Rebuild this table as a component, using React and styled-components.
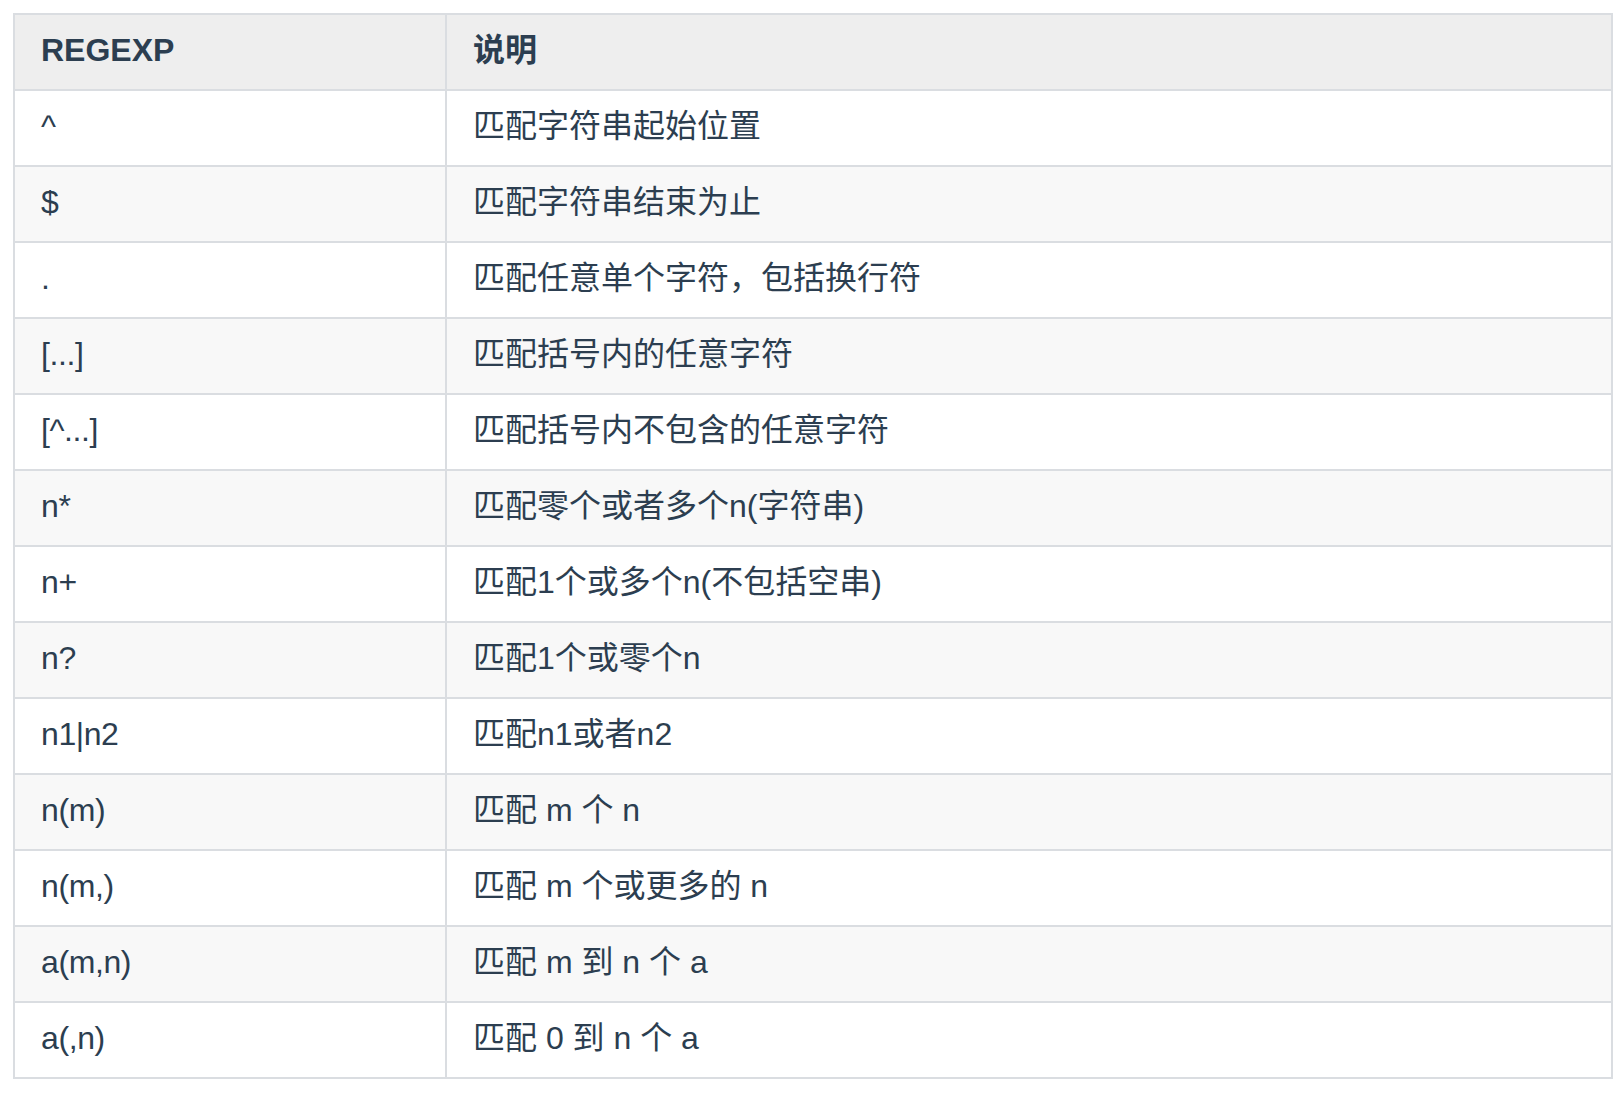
import React from "react";
import styled, { createGlobalStyle } from "styled-components";

const rows = [
  ["^", "匹配字符串起始位置"],
  ["$", "匹配字符串结束为止"],
  [".", "匹配任意单个字符，包括换行符"],
  ["[...]", "匹配括号内的任意字符"],
  ["[^...]", "匹配括号内不包含的任意字符"],
  ["n*", "匹配零个或者多个n(字符串)"],
  ["n+", "匹配1个或多个n(不包括空串)"],
  ["n?", "匹配1个或零个n"],
  ["n1|n2", "匹配n1或者n2"],
  ["n(m)", "匹配 m 个 n"],
  ["n(m,)", "匹配 m 个或更多的 n"],
  ["a(m,n)", "匹配 m 到 n 个 a"],
  ["a(,n)", "匹配 0 到 n 个 a"],
];

const GlobalStyle = createGlobalStyle`
  body {
    margin: 0;
    background: #ffffff;
    font-family: "Liberation Sans", Arial, "Noto Sans CJK SC", sans-serif;
    color: #2c3e50;
  }
`;

const Page = styled.div`
  padding: 13px 9px 13px 13px;
`;

const Table = styled.table`
  width: 1600px;
  border-collapse: collapse;
  table-layout: fixed;
  font-size: 32px;
  line-height: 1.2;
`;

const Row = styled.tr`
  height: 76px;
  background: ${(p) => (p.$striped ? "#f8f8f8" : "#ffffff")};
`;

const HeadRow = styled.tr`
  height: 76px;
  background: #eeeeee;
`;

const Th = styled.th`
  border: 2px solid #dadde1;
  padding: 0 26px 4px;
  text-align: left;
  font-weight: 700;
  vertical-align: middle;
`;

const Td = styled.td`
  border: 2px solid #dadde1;
  padding: 0 26px 3px;
  vertical-align: middle;
  white-space: nowrap;
  letter-spacing: ${(p) => (p.$code ? "-0.4px" : "0")};
`;

export default function App() {
  return (
    <Page>
      <GlobalStyle />
      <Table>
        <colgroup>
          <col style={{ width: 432 }} />
          <col />
        </colgroup>
        <thead>
          <HeadRow>
            <Th>REGEXP</Th>
            <Th>说明</Th>
          </HeadRow>
        </thead>
        <tbody>
          {rows.map(([exp, desc], i) => (
            <Row key={exp} $striped={i % 2 === 1}>
              <Td $code>{exp}</Td>
              <Td>{desc}</Td>
            </Row>
          ))}
        </tbody>
      </Table>
    </Page>
  );
}
